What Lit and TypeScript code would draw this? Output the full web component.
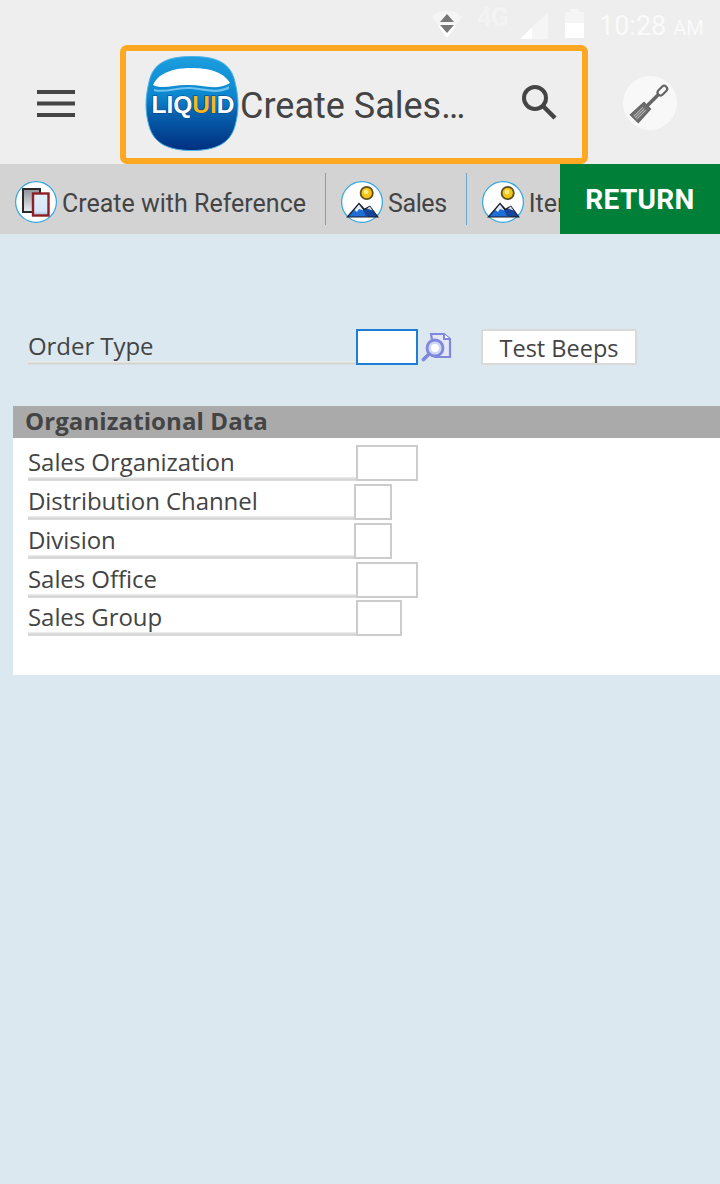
import { LitElement, html, css, svg } from "lit";
import { customElement } from "lit/decorators.js";

const mountainIcon = svg`
  <svg class="tab-icon" viewBox="0 0 42 42" width="42" height="42">
    <circle cx="21" cy="21" r="20.4" fill="#fff" stroke="#2ea5e0" stroke-width="1.2"/>
    <circle cx="25.700" cy="12" r="7" fill="#5d4f22"/>
    <circle cx="25.700" cy="12" r="5.200" fill="#f5c414"/>
    <circle cx="25" cy="11" r="2.400" fill="#fdec84"/>
    <path d="M5 36.500 L18 21.500 L23.500 27.500 L29 24.500 L38 36.500 Z" fill="#1b1d22"/>
    <path d="M7.500 35.500 L18 23.500 L27 35.500 Z" fill="#1f6ed6"/>
    <path d="M13.500 29 L18 23.500 L22.500 29.500 L18 28 L16 31 Z" fill="#e8edf4"/>
    <path d="M25 35.500 L22.500 29.500 L28.800 25.500 L36 35.500 Z" fill="#16459a"/>
    <path d="M26 27.500 L28.800 25.500 L31.500 29.500 L28.500 28.500 Z" fill="#d5dbe3"/>
  </svg>`;

const copyIcon = svg`
  <svg class="tab-icon" viewBox="0 0 42 42" width="42" height="42">
    <defs>
      <linearGradient id="cg" x1="0" y1="0" x2="0" y2="1">
        <stop offset="0" stop-color="#8f9299"/>
        <stop offset="1" stop-color="#eceef2"/>
      </linearGradient>
      <linearGradient id="cb" x1="0" y1="0" x2="0" y2="1">
        <stop offset="0" stop-color="#e2effb"/>
        <stop offset=".8" stop-color="#d6e6f7"/>
        <stop offset="1" stop-color="#aeb8dc"/>
      </linearGradient>
    </defs>
    <circle cx="21" cy="21" r="20.4" fill="#fff" stroke="#2ea5e0" stroke-width="1.2"/>
    <rect x="8" y="8" width="17" height="23" fill="url(#cg)" stroke="#2a2a2a" stroke-width="2"/>
    <rect x="18" y="12.500" width="15.500" height="22" fill="url(#cb)" stroke="#8e2025" stroke-width="2.400"/>
  </svg>`;

const logo = svg`
  <svg class="logo" viewBox="0 0 94 95" width="94" height="95">
    <defs>
      <linearGradient id="lg" x1="0" y1="0" x2="0" y2="1">
        <stop offset="0" stop-color="#1d9fdf"/>
        <stop offset=".42" stop-color="#0b86cf"/>
        <stop offset=".62" stop-color="#0660ad"/>
        <stop offset="1" stop-color="#012f80"/>
      </linearGradient>
    </defs>
    <path d="M47 .5 C72 .5 86 7 90 26 C94 42 94 56 90 70 C85 88 70 94.500 47 94.500 C24 94.500 9 88 4 70 C0 56 0 42 4 26 C8 7 22 .5 47 .5 Z" fill="url(#lg)" stroke="#4fb4e6" stroke-width="1"/>
    <path d="M8 29 C14 16 30 12 46 12 C62 12 78 15 85 27 C72 35 58 29 44 29 C30 28 18 34 8 29 Z" fill="#fff"/>
    <path d="M9 33 C20 36 32 30 46 31 C60 32 72 37 84 30 L84 33 C72 39 58 34 46 33 C32 32 20 38 9 35 Z" fill="#6fc2ec"/>
    <text x="6.500" y="57" class="logo-text" fill="#fff">LIQ<tspan fill="#f5b820">UI</tspan>D</text>
  </svg>`;

@customElement("app-root")
export class AppRoot extends LitElement {
  static styles = css`
    :host {
      display: block;
      min-height: 1184px;
      background: #dce8f0;
      color: #444;
      font-family: "Open Sans", sans-serif;
    }
    .top { background: #eee; height: 164px; }
    .status {
      height: 45px;
      display: flex;
      align-items: flex-start;
      font-family: Roboto, sans-serif;
      color: #fafafa;
      padding-left: 432px;
      box-sizing: border-box;
    }
    .status svg { display: block; }
    .wifi { margin-top: 10px; }
    .net { font-size: 26px; font-weight: 700; line-height: 24px; margin: 5px 10px 0 15px; width: 33px; letter-spacing: -0.8px; color: #f3f3f3; }
    .signal { margin-top: 12px; }
    .battery { margin: 9px 15px 0 17px; }
    .time { font-size: 27px; line-height: 32px; margin-top: 10px; white-space: nowrap; }
    .time small { font-size: 20px; margin-left: 7px; }

    .bar { height: 119px; display: flex; align-items: flex-start; }
    .menu { margin: 45px 45px 0 37px; display: block; flex: none; }
    .focus {
      width: 468px;
      height: 119px;
      box-sizing: border-box;
      border: 6px solid #fca822;
      border-radius: 7px;
      display: flex;
      align-items: flex-start;
      padding-left: 19px;
      flex: none;
    }
    .logo { display: block; margin-top: 5px; flex: none; }
    .logo-text { font: 900 24.500px "Liberation Sans", sans-serif; stroke: #0b3f80; stroke-width: 1.2px; paint-order: stroke; }
    .title {
      font-family: Roboto, sans-serif;
      font-size: 36px;
      line-height: 42px;
      margin: 34px 0 0 1px;
      width: 224px;
      flex: none;
      white-space: nowrap;
    }
    .search { display: block; margin: 33px 0 0 57px; flex: none; }
    .tool {
      margin: 31px 0 0 35px;
      width: 54px;
      height: 54px;
      border-radius: 50%;
      background: #f8f8f8;
      display: flex;
      align-items: center;
      justify-content: center;
      flex: none;
    }

    .toolbar { height: 70px; background: #d3d3d3; display: flex; font-family: Roboto, sans-serif; }
    .tabs { width: 560px; overflow: hidden; display: flex; align-items: center; flex: none; }
    .tab { display: flex; align-items: center; height: 52px; flex: none; padding: 0 19px 0 15px; border-right: 1px solid #6fa3c9; }
    .tab:last-child { border-right: 0; }
    .tab-icon { display: block; flex: none; margin: 6px 5px 0 0; }
    .tab span { font-size: 25px; margin-top: 8px; color: #444; white-space: nowrap; }
    .tab.short span { letter-spacing: -0.4px; }
    .return {
      flex: 1;
      background: #007f38;
      color: #fff;
      font-size: 28px;
      font-weight: 700;
      padding-top: 1px;
      display: flex;
      align-items: center;
      justify-content: center;
      letter-spacing: .3px;
    }

    .order { display: flex; align-items: flex-start; margin: 95px 0 0 28px; height: 36px; }
    .label {
      width: 328px;
      height: 36px;
      flex: none;
      font-size: 24px;
      line-height: 34px;
      box-sizing: border-box;
      white-space: nowrap;
      display: flex;
      flex-direction: column;
      justify-content: flex-end;
    }
    .label b {
      font-weight: 400;
      display: block;
      letter-spacing: -0.06px;
    }
    .label i {
      display: block;
      height: 4px;
      flex: none;
      margin-top: -2px;
      background: linear-gradient(#f0f0f0, #d2d2d2 65%, #e0e0e0);
    }
    .input { height: 36px; box-sizing: border-box; border: 2px solid #ccc; background: #fff; flex: none; }
    .active { border-color: #1d7ed6; width: 62px; }
    .lookup { display: block; margin: 3px 29px 0 3px; flex: none; }
    .btn {
      width: 156px;
      height: 36px;
      box-sizing: border-box;
      border: 2px solid #d9d9d9;
      border-radius: 2px;
      background: #fff;
      font-size: 23.500px;
      line-height: 34px;
      text-align: center;
    }
    .section { margin: 41px 0 0 13px; background: #fff; padding-bottom: 36px; }
    .section h2 {
      margin: 0 0 7px;
      height: 32px;
      background: #aaa;
      color: #444;
      font-size: 24px;
      line-height: 29px;
      font-weight: 700;
      letter-spacing: .1px;
      padding-left: 12px;
    }
    .row { display: flex; margin: 0 0 3px 15px; height: 36px; }
    .row.tight { margin-top: -1px; }
    .w62 { width: 62px; }
    .w38 { width: 38px; margin-left: -2px; }
    .w46 { width: 46px; }
  `;

  render() {
    const rows = [
      ["Sales Organization", "w62", ""],
      ["Distribution Channel", "w38", ""],
      ["Division", "w38", ""],
      ["Sales Office", "w62", ""],
      ["Sales Group", "w46", "tight"],
    ];
    return html`
      <div class="top">
        <div class="status">
          <svg class="wifi" width="30" height="28" viewBox="0 0 30 28">
            <path d="M0 7 C8 -1.500 22 -1.500 30 7 L15 28 Z" fill="#f5f5f5"/>
            <path d="M6.500 16 C11 13 19 13 23.500 16 L15 28 Z" fill="#fff"/>
            <path d="M15 4 L22 12 H8 Z M8 15 H22 L15 23 Z" fill="#777"/>
          </svg>
          <div class="net">4G</div>
          <svg class="signal" width="28" height="27" viewBox="0 0 28 27">
            <path d="M0 27 L28 0 V27 Z" fill="#f5f5f5"/>
            <path d="M0 27 L12 15.500 V27 Z" fill="#fff"/>
          </svg>
          <svg class="battery" width="19" height="29" viewBox="0 0 19 29">
            <path d="M5 0 H14 V3 H19 V29 H0 V3 H5 Z" fill="#f5f5f5"/>
            <rect y="14" width="19" height="15" fill="#fff"/>
          </svg>
          <div class="time">10:28<small>AM</small></div>
        </div>
        <div class="bar">
          <svg class="menu" width="38" height="27" viewBox="0 0 38 27">
            <path d="M0 0 H38 V4 H0 Z M0 11.500 H38 V15.500 H0 Z M0 23 H38 V27 H0 Z" fill="#444"/>
          </svg>
          <div class="focus">
            ${logo}
            <div class="title">Create Sales…</div>
            <svg class="search" width="36" height="36" viewBox="0 0 36 36">
              <circle cx="14" cy="14" r="11" fill="none" stroke="#444" stroke-width="4"/>
              <path d="M22 22 L34 34" stroke="#444" stroke-width="4.500" fill="none"/>
            </svg>
          </div>
          <div class="tool">
            <svg width="46" height="46" viewBox="0 0 46 46">
              <g transform="rotate(45 23 23)" fill="none" stroke="#666">
                <rect x="20" y="0" width="6" height="11" rx="3" stroke-width="2.200"/>
                <path d="M23 11 V27" stroke-width="3.600"/>
                <path d="M18.500 27 H27.500 L28.500 45 H17.500 Z" fill="#6e6e6e" stroke="#666" stroke-width="1.500"/>
                <path d="M21 31 V44 M23 31 V44 M25 31 V44" stroke="#b8b8b8" stroke-width="1"/>
              </g>
            </svg>
          </div>
        </div>
      </div>
      <div class="toolbar">
        <div class="tabs">
          <div class="tab">${copyIcon}<span>Create with Reference</span></div>
          <div class="tab short">${mountainIcon}<span>Sales</span></div>
          <div class="tab">${mountainIcon}<span>Item</span></div>
        </div>
        <div class="return">RETURN</div>
      </div>
      <div class="order">
        <div class="label"><b>Order Type</b><i></i></div>
        <div class="input active"></div>
        <svg class="lookup" width="31" height="30" viewBox="0 0 31 30">
          <path d="M10 2 H23 L29 7 V25 H14 Z" fill="#e3e7f6" stroke="#7f88dc" stroke-width="2.200"/>
          <path d="M23 2 V7 H29" fill="#fff" stroke="#7f88dc" stroke-width="2"/>
          <circle cx="14" cy="16" r="8" fill="#cfd7f2" stroke="#7f88dc" stroke-width="2.800"/>
          <circle cx="14" cy="16" r="4" fill="#fff"/>
          <path d="M8 22 L2.500 27.500" stroke="#7f88dc" stroke-width="3.800" stroke-linecap="round"/>
        </svg>
        <div class="btn">Test Beeps</div>
      </div>
      <div class="section">
        <h2>Organizational Data</h2>
        ${rows.map(
          ([t, w, c]) => html`<div class="row ${c}">
            <div class="label"><b>${t}</b><i></i></div>
            <div class="input ${w}"></div>
          </div>`
        )}
      </div>
    `;
  }
}
